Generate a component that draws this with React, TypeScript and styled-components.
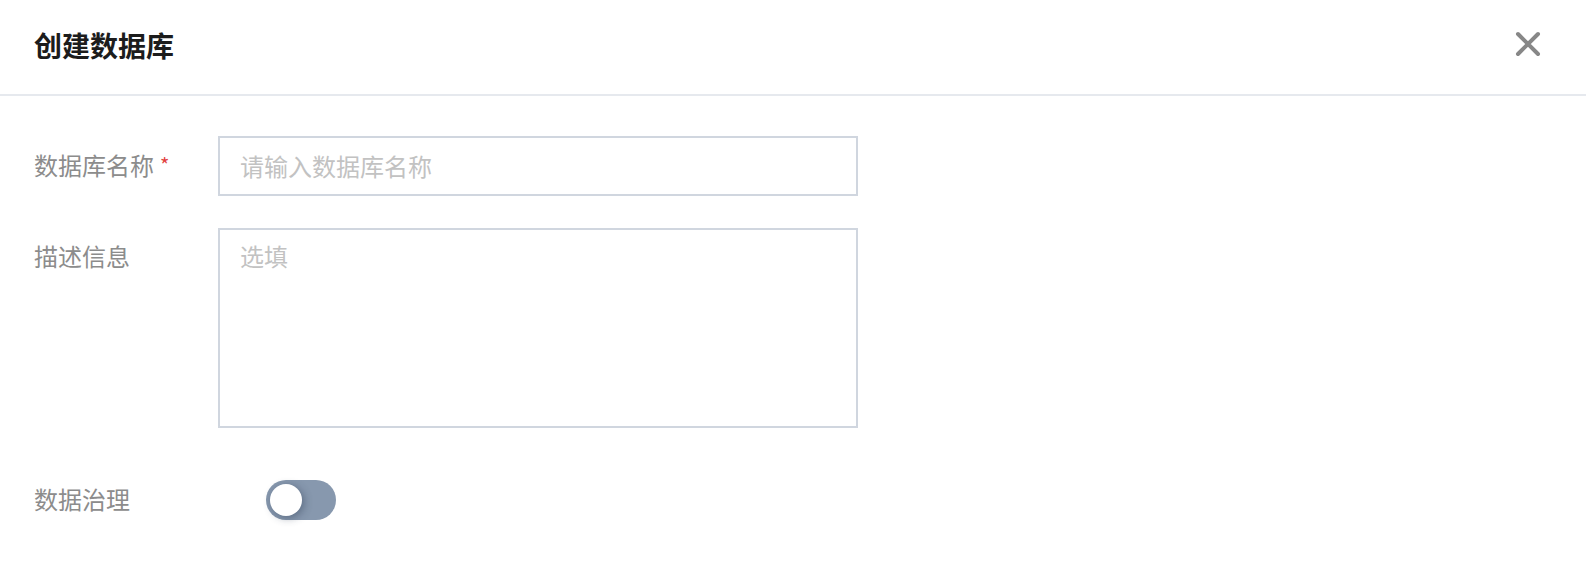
import React from 'react'
import styled, { createGlobalStyle } from 'styled-components'

const GlobalStyle = createGlobalStyle`
    html, body {
        margin: 0;
        padding: 0;
        background: #fff;
    }
    body {
        font-family: "Noto Sans CJK SC", "Noto Sans", sans-serif;
    }
    * {
        box-sizing: border-box;
    }
`

const Dialog = styled.div`
    width: 1586px;
    height: 564px;
    background: #fff;
    overflow: hidden;
`

const Header = styled.div`
    height: 96px;
    padding: 0 46px 0 34px;
    display: flex;
    align-items: center;
    justify-content: space-between;
    border-bottom: 2px solid #e6e9ee;
`

const Title = styled.div`
    font-size: 28px;
    font-weight: 700;
    color: #1c1c1c;
    line-height: 40px;
    margin-top: -4px;
`

const CloseButton = styled.button`
    width: 26px;
    height: 26px;
    padding: 0;
    border: none;
    background: none;
    cursor: pointer;
    display: flex;
    align-items: center;
    justify-content: center;
    margin-top: -6px;
    margin-right: -1px;
`

const Form = styled.div`
    padding: 40px 0 0 34px;
    display: flex;
    flex-direction: column;
`

const Row = styled.div<{ $gap?: number; $center?: boolean }>`
    display: flex;
    align-items: ${p => (p.$center ? 'center' : 'flex-start')};
    margin-top: ${p => p.$gap || 0}px;
`

const Label = styled.div<{ $offset?: number }>`
    width: 184px;
    flex-shrink: 0;
    font-size: 24px;
    line-height: 36px;
    color: #8c8c8c;
    margin-top: ${p => p.$offset || 0}px;
    display: flex;
    align-items: center;
`

const Required = styled.span`
    color: #e2423f;
    font-size: 20px;
    margin-left: 6px;
    line-height: 1;
`

const TextInput = styled.input`
    width: 640px;
    height: 60px;
    border: 2px solid #d0d6df;
    padding: 0 20px 2px;
    font-family: inherit;
    font-size: 24px;
    color: #333;
    outline: none;
    &::placeholder {
        color: #c2c2c2;
    }
`

const TextArea = styled.textarea`
    width: 640px;
    height: 200px;
    border: 2px solid #d0d6df;
    padding: 8px 20px;
    font-family: inherit;
    font-size: 24px;
    line-height: 36px;
    color: #333;
    outline: none;
    resize: none;
    display: block;
    &::placeholder {
        color: #c2c2c2;
    }
`

const Switch = styled.button<{ $on: boolean }>`
    position: relative;
    width: 70px;
    height: 40px;
    margin-left: 48px;
    margin-top: 2px;
    border: none;
    padding: 0;
    border-radius: 20px;
    background: ${p => (p.$on ? '#3d7bf7' : '#8798ae')};
    cursor: pointer;
`

const Knob = styled.span<{ $on: boolean }>`
    position: absolute;
    top: 4px;
    left: ${p => (p.$on ? '34px' : '4px')};
    width: 32px;
    height: 32px;
    border-radius: 50%;
    background: #fff;
    box-shadow: 2px 2px 8px rgba(40, 55, 80, 0.45);
`

export default function App() {
    const [on, setOn] = React.useState(false)
    return (
        <Dialog>
            <GlobalStyle />
            <Header>
                <Title>创建数据库</Title>
                <CloseButton aria-label="关闭">
                    <svg width="26" height="26" viewBox="0 0 26 26">
                        <path d="M3 3 L23 23 M23 3 L3 23" stroke="#878787" strokeWidth="4" strokeLinecap="round" />
                    </svg>
                </CloseButton>
            </Header>
            <Form>
                <Row $center>
                    <Label $offset={-2}>
                        数据库名称<Required>*</Required>
                    </Label>
                    <TextInput placeholder="请输入数据库名称" />
                </Row>
                <Row $gap={32}>
                    <Label $offset={10}>描述信息</Label>
                    <TextArea placeholder="选填" />
                </Row>
                <Row $gap={50} $center>
                    <Label>数据治理</Label>
                    <Switch $on={on} onClick={() => setOn(!on)}>
                        <Knob $on={on} />
                    </Switch>
                </Row>
            </Form>
        </Dialog>
    )
}
